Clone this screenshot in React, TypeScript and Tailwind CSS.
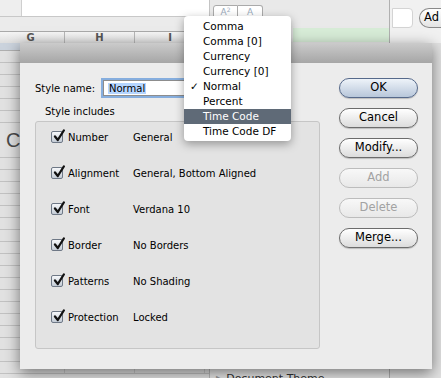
import React from "react";

const rows: [string, string][] = [
  ["Number", "General"],
  ["Alignment", "General, Bottom Aligned"],
  ["Font", "Verdana 10"],
  ["Border", "No Borders"],
  ["Patterns", "No Shading"],
  ["Protection", "Locked"],
];

const menuItems = [
  "Comma",
  "Comma [0]",
  "Currency",
  "Currency [0]",
  "Normal",
  "Percent",
  "Time Code",
  "Time Code DF",
];

function CheckBox() {
  return (
    <span className="relative block w-[12px] h-[12px] shrink-0 rounded-[2px] border border-[#6e7886] bg-gradient-to-b from-[#f6f8fa] to-[#c4ccd6]">
      <svg className="absolute left-[1px] top-[-3px]" width="12" height="13" viewBox="0 0 12 13">
        <path d="M2 7.5 L4.8 11 L10.8 1.5" fill="none" stroke="#111" strokeWidth="2.3" strokeLinecap="round" strokeLinejoin="round" />
      </svg>
    </span>
  );
}

function Btn({ label, kind }: { label: string; kind?: "default" | "disabled" }) {
  const base = "h-[20px] w-full rounded-full border flex items-center justify-center text-[11.5px] leading-none";
  const cls =
    kind === "default"
      ? "border-[#56698a] bg-gradient-to-b from-[#eef3f9] to-[#b8c7da] text-black shadow-[0_1px_1px_rgba(0,0,0,0.2)]"
      : kind === "disabled"
      ? "border-[#bcbcbc] bg-gradient-to-b from-[#f8f8f8] to-[#e8e8e8] text-[#a2a2a2]"
      : "border-[#6c6c6c] bg-gradient-to-b from-white to-[#dcdcdc] text-black shadow-[0_1px_1px_rgba(0,0,0,0.2)]";
  return <div className={`${base} ${cls}`}>{label}</div>;
}

function SheetRow({ h, children }: { h: string; children?: React.ReactNode }) {
  return (
    <div className={`flex border-b border-[#c2c2c2] ${h}`}>
      <div className="w-[65px] border-r border-[#c8c8c8] flex items-center pl-[7px]">{children}</div>
      <div className="w-[70px] border-r border-[#c8c8c8]" />
      <div className="w-[70px] border-r border-[#c8c8c8]" />
    </div>
  );
}

export default function App() {
  const plainRows = Array.from({ length: 6 });
  const lowerRows = Array.from({ length: 18 });
  return (
    <div className="relative w-[441px] h-[378px] overflow-hidden bg-[#e6e6e6] font-['DejaVu_Sans',sans-serif] text-[10px] text-black">
      {/* background application */}
      <div className="flex flex-col h-full">
        <div className="flex h-[43px] shrink-0">
          <div className="w-[209px] flex flex-col">
            <div className="h-[17px] flex border-b border-[#c8c8c8]">
              <div className="w-[22px] bg-[#eeeeee] border-r border-[#cfcfcf]" />
              <div className="flex-1 bg-white" />
            </div>
            <div className="h-[15px] bg-[#ebebeb] border-b border-[#a9a9a9]" />
            <div className="flex-1 flex bg-gradient-to-b from-[#f5f5f5] to-[#dedede] text-[10px] font-bold text-[#555] leading-[10px]">
              <div className="w-[65px] border-r border-[#b5b5b5] flex items-center justify-center pr-[3px]">G</div>
              <div className="w-[70px] border-r border-[#b5b5b5] flex items-center justify-center">H</div>
              <div className="w-[70px] flex items-center justify-center">I</div>
            </div>
          </div>
          <div className="w-[181px] bg-[#e9e9e9] border-l border-l-[#c4c4c4] border-r border-r-[#b0b0b0] flex flex-col">
            <div className="flex pl-[3px] pt-[5px]">
              <div className="w-[25px] h-[16px] border border-[#aaaaaa] rounded-l-[3px] bg-white flex items-center justify-center text-[9px] text-[#9aaabb]">
                A<sup className="text-[6px]">2</sup>
              </div>
              <div className="w-[25px] h-[16px] border border-l-0 border-[#aaaaaa] rounded-r-[3px] bg-white flex items-center justify-center text-[9px] text-[#9aaabb]">
                A
              </div>
            </div>
            <div className="mt-auto mb-[1px] ml-[83px] h-[14px] bg-[#d7ecd7]" />
          </div>
          <div className="flex-1 bg-[#f1f1f1] flex items-start pt-[8px] pl-[2px] gap-[6px]">
            <div className="w-[21px] h-[20px] bg-white border border-[#d4d4d4] rounded-r-[4px]" />
            <div className="h-[20px] flex-1 rounded-l-full border border-r-0 border-[#8a8a8a] bg-gradient-to-b from-white to-[#e4e4e4] pl-[4px] flex items-center text-[11.5px]">
              Ad
            </div>
          </div>
        </div>
        <div className="flex flex-1 min-h-0">
          <div className="w-[209px] flex flex-col bg-[#e2e2e2] overflow-hidden">
            <div className="h-[8px] shrink-0 bg-[#cbd3dd] border-b border-[#b0b0b0]" />
            {plainRows.map((_, i) => (
              <SheetRow key={i} h="h-[12px] shrink-0" />
            ))}
            <SheetRow h="h-[35px] shrink-0">
              <span className="text-[20px] leading-none text-[#4a4a4a] font-['Liberation_Sans',sans-serif] ml-[-1px]">C</span>
            </SheetRow>
            {lowerRows.map((_, i) => (
              <SheetRow key={i} h="h-[12px] shrink-0" />
            ))}
          </div>
          <div className="w-[181px] bg-[#e8e8e8] border-l border-l-[#b8b8b8] border-r border-r-[#b0b0b0] pt-[329px] pl-[6px] flex items-start gap-[4px] text-[11px] text-[#333]">
            <span className="text-[8px] text-[#999] leading-[14px]">▶</span>
            <span className="leading-[14px]">Document Theme</span>
          </div>
          <div className="flex-1 bg-[#e2e2e2]" />
        </div>
      </div>

      {/* dialog sheet */}
      <div className="absolute left-[20px] top-[43px] w-[412px] h-[326px] bg-[#ececec] shadow-[0_4px_14px_rgba(0,0,0,0.5)] flex flex-col">
        <div className="h-[20px] shrink-0 bg-gradient-to-b from-[#cbcbcb] to-[#a6a6a6]" />
        <div className="flex-1 flex pl-[15px] pr-[14px]">
          <div className="w-[285px] flex flex-col pt-[17px]">
            <div className="flex items-center h-[16px]">
              <span className="w-[68px] shrink-0">Style name:</span>
              <div className="w-[180px] h-[16px] bg-white border border-[#8d8d8d] shadow-[0_0_0_2px_#86aede] flex items-center pl-[4px]">
                <span className="bg-[#b5d5ff] px-[1px] leading-[11px]">Normal</span>
              </div>
            </div>
            <div className="mt-[10px] pl-[10px] leading-[12px]">Style includes</div>
            <div className="mt-[3px] h-[228px] rounded-[3px] border border-[#c6c6c6] bg-[#e3e3e3] pl-[15px] pt-[9px] flex flex-col gap-[24px]">
              {rows.map(([label, value]) => (
                <div key={label} className="flex items-center h-[12px]">
                  <CheckBox />
                  <span className="ml-[5px] w-[65px] shrink-0">{label}</span>
                  <span>{value}</span>
                </div>
              ))}
            </div>
          </div>
          <div className="ml-auto w-[79px] pt-[15px] flex flex-col gap-[10px]">
            <Btn label="OK" kind="default" />
            <Btn label="Cancel" />
            <Btn label="Modify..." />
            <Btn label="Add" kind="disabled" />
            <Btn label="Delete" kind="disabled" />
            <Btn label="Merge..." />
          </div>
        </div>
      </div>

      {/* popup menu */}
      <div className="absolute left-[184px] top-[16px] w-[107px] bg-white rounded-[4px] shadow-[0_3px_10px_rgba(0,0,0,0.35)] pt-[3px] pb-[2px] text-[10.5px]">
        {menuItems.map((item) => (
          <div
            key={item}
            className={`relative h-[15px] flex items-center pl-[19px] ${item === "Time Code" ? "bg-[#5f6a77] text-white" : "text-black"}`}
          >
            {item === "Normal" && <span className="absolute left-[6px]">✓</span>}
            {item}
          </div>
        ))}
      </div>
    </div>
  );
}
